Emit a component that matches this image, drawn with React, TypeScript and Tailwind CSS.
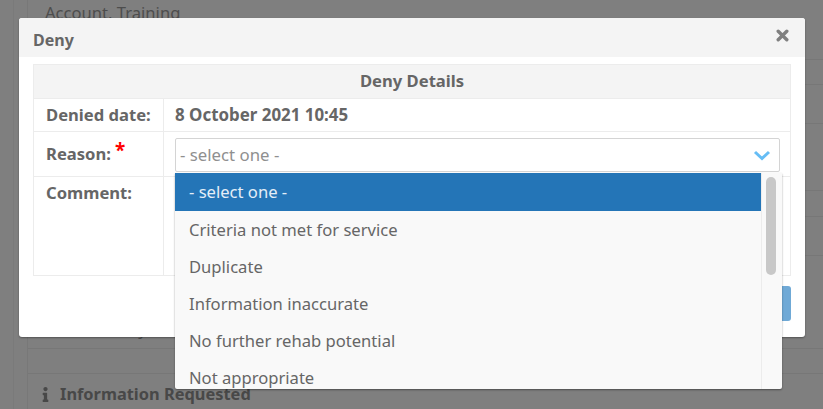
import React from "react";
import { FaInfo } from "react-icons/fa";

const font = { fontFamily: '"Noto Sans", "Open Sans", sans-serif' };
const options = [
  "Criteria not met for service",
  "Duplicate",
  "Information inaccurate",
  "No further rehab potential",
  "Not appropriate",
];

export default function App() {
  return (
    <div className="relative h-[409px] w-[823px] overflow-hidden bg-[#7f7f7f] text-[#666]" style={font}>
      {/* dimmed page behind */}
      <div className="ml-[13px] h-full border-l border-[#7a7a7a] pl-[13px]">
        <div className="h-full border-l border-[#787878] text-[16.6px] text-[#4a4a4a]">
          <div className="h-[60px] border-b border-[#777] pl-[17px] pt-[1px] text-[#4d4d4d]">Account, Training</div>
          <div className="h-[25px] border-b border-[#777]" />
          <div className="h-[39px] border-b border-[#777]" />
          <div className="h-[67px] border-b border-[#777]" />
          <div className="h-[26px] border-b border-[#777]" />
          <div className="h-[39px] border-b border-[#777]" />
          <div className="h-[93px] border-b border-[#777] pl-[18px] pt-[61px] text-[#4d4d4d]">Service entry</div>
          <div className="h-[25px] border-b border-[#777]" />
          <div className="flex items-center gap-[10px] pl-[13px] pt-[8px] font-bold text-[#484848]">
            <FaInfo className="h-[15px] w-[9px]" />
            <span className="text-[16.4px]">Information Requested</span>
          </div>
        </div>
      </div>

      {/* modal */}
      <div className="absolute left-[19px] top-[18px] flex h-[319px] w-[786px] flex-col rounded-[3px] bg-white shadow-[0_1px_2px_rgba(0,0,0,0.35)]">
        <div className="flex h-[39px] items-center justify-between rounded-t-[3px] bg-[#f4f4f4] pl-[14px] pr-[16px]">
          <span className="pt-[4px] text-[16px] font-bold">Deny</span>
          <svg width="13" height="13" viewBox="0 0 13 13" className="mb-[4px]">
            <path d="M2.2 2.2l8.6 8.6M10.8 2.2l-8.6 8.6" stroke="#808080" strokeWidth="3.4" strokeLinecap="round" />
          </svg>
        </div>
        <div className="px-[14px] pt-[7px]">
          <div className="border border-[#ececec] text-[16.6px]">
            <div className="flex h-[34px] items-center justify-center border-b border-[#ececec] bg-[#f4f4f4] font-bold">
              Deny Details
            </div>
            <div className="flex h-[33px] border-b border-[#ececec]">
              <div className="flex w-[130px] items-center border-r border-[#ececec] pl-[12px] font-bold">Denied date:</div>
              <div className="flex items-center pl-[11px] text-[16.9px] font-bold">8 October 2021 10:45</div>
            </div>
            <div className="flex h-[45px] border-b border-[#ececec]">
              <div className="flex w-[130px] items-center border-r border-[#ececec] pl-[12px] pt-[1px] font-bold">
                Reason:
                <span className="mb-[9px] ml-[4px] text-[19px] leading-none text-[#ff0000]">*</span>
              </div>
            </div>
            <div className="flex h-[98px]">
              <div className="w-[130px] border-r border-[#ececec] pl-[12px] pt-[4px] font-bold">Comment:</div>
            </div>
          </div>
          <div className="mt-[10px] flex justify-end">
            <div className="h-[35px] w-[40px] rounded-[3px] bg-[#6fa9d6]" />
          </div>
        </div>
      </div>

      {/* select */}
      <div className="absolute left-[175px] top-[138px] flex h-[34px] w-[605px] items-center justify-between rounded-[2px] border border-[#d4d4d4] bg-white pl-[4px] pr-[8px] text-[16.8px] text-[#8f8f8f]">
        <span>- select one -</span>
        <svg width="18" height="11" viewBox="0 0 18 11">
          <path d="M2 2l7 6.5L16 2" fill="none" stroke="#66bdf5" strokeWidth="3" />
        </svg>
      </div>

      {/* dropdown */}
      <div className="absolute left-[175px] top-[173px] flex h-[216px] w-[607px] overflow-hidden rounded-b-[2px] bg-[#f9f9f9] shadow-[0_1px_2px_rgba(0,0,0,0.4)]">
        <div className="h-full w-[586px] shrink-0 overflow-hidden text-[16.6px]">
          <div className="flex h-[38px] items-center bg-[#2475b7] pl-[14px] text-[#e4eef7]">- select one -</div>
          {options.map((o) => (
            <div key={o} className="flex h-[37px] items-center pl-[14px] pt-[1px]">
              {o}
            </div>
          ))}
        </div>
        <div className="h-full w-[21px] border-l border-[#ececec] pl-[4px] pt-[4px]">
          <div className="h-[98px] w-[10px] rounded-[5px] bg-[#c8c8c8]" />
        </div>
      </div>
    </div>
  );
}
